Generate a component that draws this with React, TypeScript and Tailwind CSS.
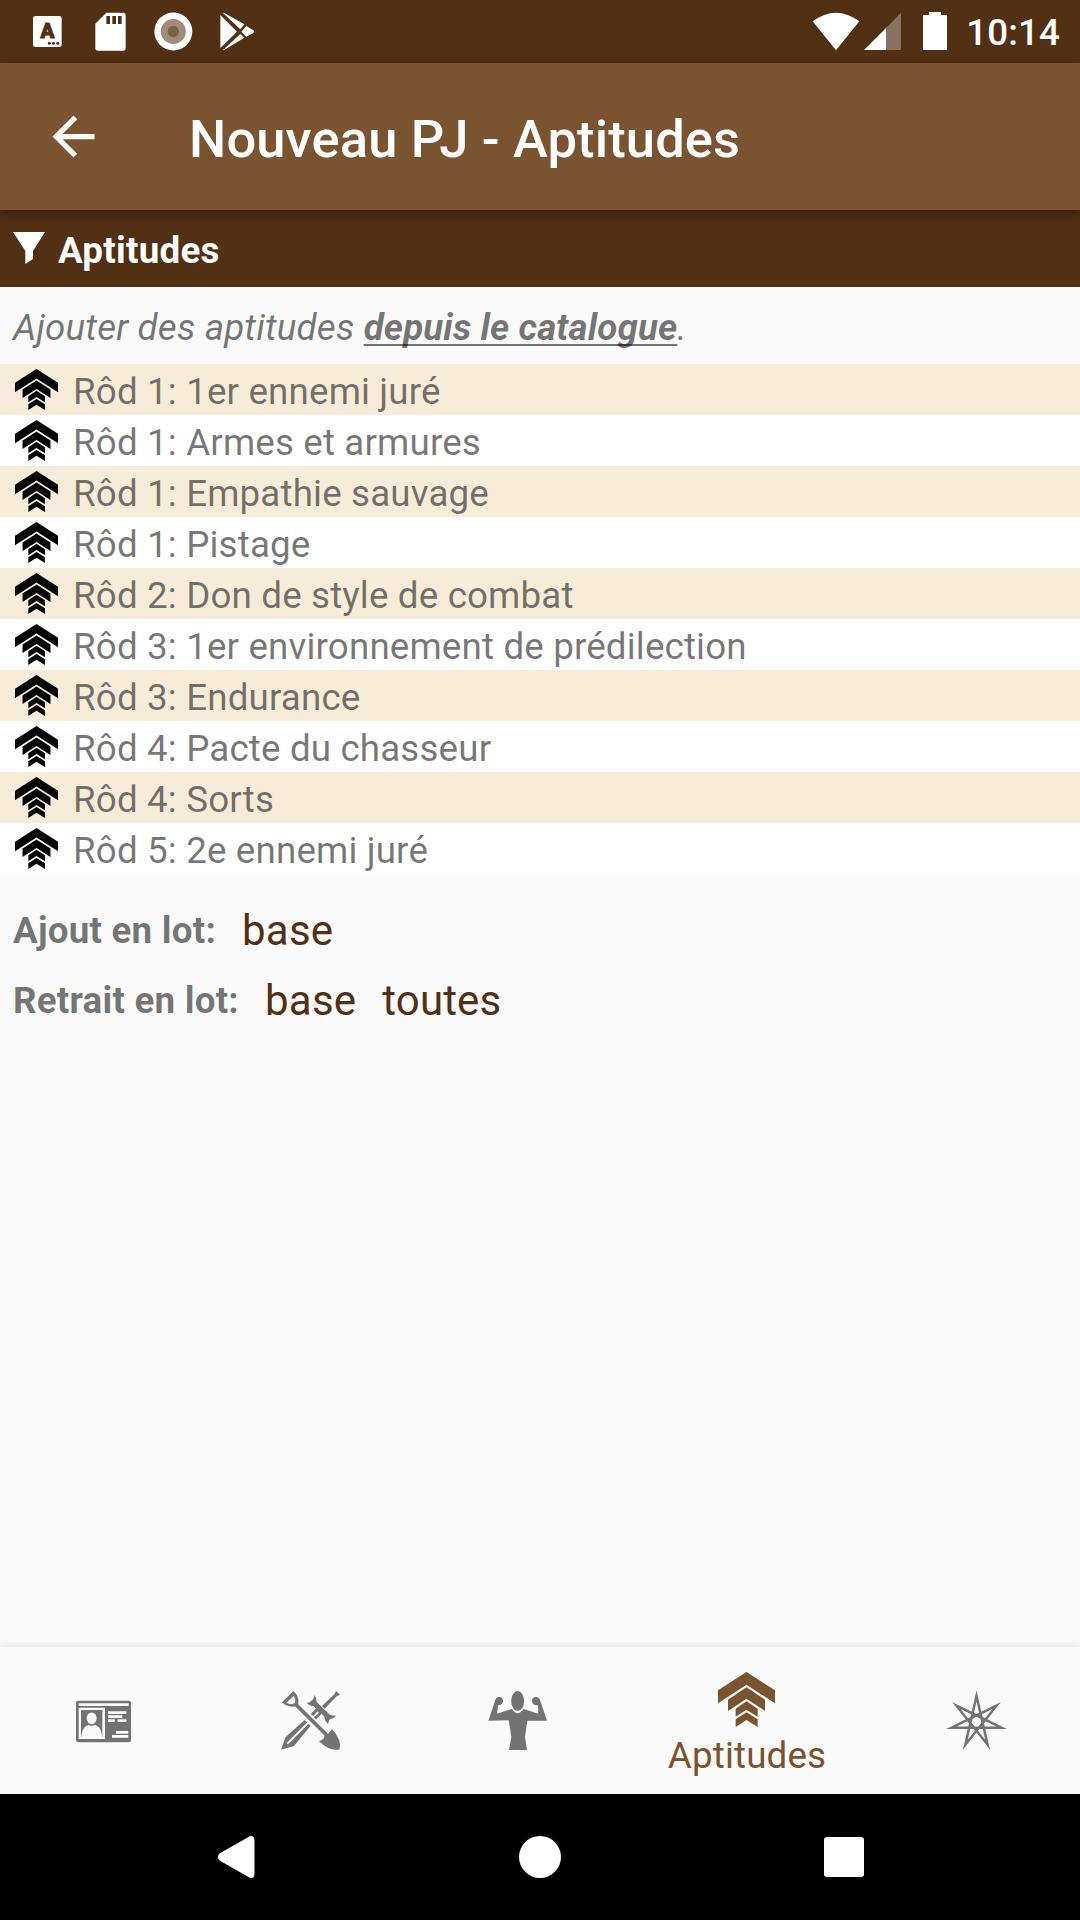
import React from "react";

const aptitudes = [
  "Rôd 1: 1er ennemi juré",
  "Rôd 1: Armes et armures",
  "Rôd 1: Empathie sauvage",
  "Rôd 1: Pistage",
  "Rôd 2: Don de style de combat",
  "Rôd 3: 1er environnement de prédilection",
  "Rôd 3: Endurance",
  "Rôd 4: Pacte du chasseur",
  "Rôd 4: Sorts",
  "Rôd 5: 2e ennemi juré",
];

function Chevrons({ className }: { className: string }) {
  return (
    <svg className={className} viewBox="804 126 171 165" preserveAspectRatio="none" fill="currentColor">
      <path d="M889.5 126 975 181v39l-85.500-56L804 220v-39z" />
      <path d="M889.500 172 945 209v34l-55.500-37L834 243v-34z" />
      <path d="M889.500 214 923 236v24l-33.500-21-32.500 21v-24z" />
      <path d="M889.500 247 923 268v23l-33.500-21-32.500 21v-23z" />
    </svg>
  );
}

function StatusBar() {
  return (
    <header className="flex h-[63px] items-center bg-[#513014] pl-4 pr-[20px] text-white">
      <svg className="size-[63px]" viewBox="48 0 189 189" fill="currentColor">
        <rect x="99" y="48" width="86" height="93" rx="7" />
        <text x="142" y="114" fontSize="61" fontWeight="900" textAnchor="middle" fontFamily="Roboto, sans-serif" fill="#513014" stroke="#513014" strokeWidth="3">A</text>
        <g fill="#513014">
          <circle cx="148" cy="129.500" r="4.500" />
          <circle cx="160.500" cy="129.500" r="4.500" />
          <circle cx="173" cy="129.500" r="4.500" />
        </g>
      </svg>
      <svg className="size-[63px]" viewBox="237 0 189 189" fill="currentColor">
        <path d="M319 38h50q8 0 8 8v98q0 8-8 8h-75q-8 0-8-8V71z" />
        <path fill="#513014" d="M319 48h11v24h-11zM337 48h11v24h-11zM354 48h11v24h-11z" />
      </svg>
      <svg className="size-[63px]" viewBox="426 0 189 189">
        <circle cx="520" cy="94.500" r="57" fill="white" />
        <circle cx="520" cy="94.500" r="37.500" fill="#a18c7b" />
        <circle cx="520" cy="94.500" r="17" fill="#7b6149" />
      </svg>
      <svg className="size-[63px]" viewBox="615 0 189 189" fill="currentColor">
        <path d="M661 45 711 95l-50 49zM668 38q5 0 9 3l56 32-12 15zM668 151l53-49 12 11-57 35q-4 3-8 3zM739 78l21 13q5 4 0 8l-21 11-15-15z" />
      </svg>
      <div className="flex-1" />
      <svg className="h-[63px] w-[57px]" viewBox="72 0 171 189" fill="currentColor">
        <path d="M95 64q70-52 140 0l-70 87z" />
      </svg>
      <svg className="h-[63px] w-[49px]" viewBox="243 0 147 189" fill="currentColor">
        <path d="M360 38V150H315V84z" opacity=".32" />
        <path d="M315 84V150H249z" />
      </svg>
      <svg className="h-[63px] w-[48px]" viewBox="390 0 144 189" fill="currentColor">
        <path d="M444 36h36v9h18v105h-72V45h18z" />
      </svg>
      <span className="ml-[7px] mt-[4px] text-[36.75px] leading-none font-medium tracking-[0.1px]">10:14</span>
    </header>
  );
}

function AppBar() {
  return (
    <div className="relative z-10 flex h-[147px] items-center bg-[#7a5330] text-white shadow-[0_4px_10px_rgba(0,0,0,0.35)]">
      <svg className="ml-[42px] size-[63px]" viewBox="0 0 24 24" fill="currentColor">
        <path d="M20 11H7.830l5.590-5.590L12 4l-8 8 8 8 1.410-1.410L7.830 13H20v-2z" />
      </svg>
      <h1 className="ml-[84px] mt-[5px] text-[52.5px] leading-none font-medium tracking-[0.13px] whitespace-nowrap">Nouveau PJ - Aptitudes</h1>
    </div>
  );
}

function BottomNav() {
  const item = "flex w-[207px] items-center justify-center";
  return (
    <nav className="flex h-[147px] bg-[#fafafa] text-[#737373] shadow-[0_-1px_8px_rgba(0,0,0,0.1)]">
      <div className={item}>
        <svg className="size-[63px]" viewBox="66 177 189 189" fill="currentColor">
          <rect x="78" y="212" width="165" height="125" rx="7" />
          <path fill="#fafafa" d="M86 220h150v8H86zM86 233h79v94H86zM174 244h55v8h-55zM174 256h43v8h-43zM174 268h20v8h-20zM203 268h26v8h-26zM198 303h37v8h-37zM186 315h49v8h-49z" />
          <path d="M93 240h64v81H93z" />
          <ellipse cx="125" cy="265" rx="15" ry="17.500" fill="#fafafa" />
          <path fill="#fafafa" d="M110 287q5-3 8-1 7 4 14 0 4-2 9 1 14 8 15 34H94q2-27 16-34z" />
        </svg>
      </div>
      <div className={item}>
        <svg className="size-[63px]" viewBox="21 15 189 189" fill="currentColor">
          {/* sword: hilt, guard, blade */}
          <path d="M192 21 204 32 194 37 158 74 150 66 187 31z" />
          <path d="M127 33Q135 42 134 54L172 91Q182 97 192 94 188 103 175 105 169 110 168 120 158 111 157 98L149 89 131 107 125 101 141 86 137 82 123 96 116 90 132 74 125 66Q112 66 104 56 114 58 117 51 125 48 127 33z" />
          <path d="M98 108 116 125 66 186 27 197 41 159z" />
          <path d="M112 113 46 179" stroke="#fafafa" strokeWidth="6" />
          {/* shovel: grip, shaft, scoop */}
          <path d="M71 61 164 153" stroke="#fafafa" strokeWidth="22" />
          <path fillRule="evenodd" d="M64 21Q82 36 79 60L72 67Q47 72 30 55zM66 35 42 57Q57 63 68 58 72 46 66 35z" />
          <path d="M70 60 164 153" stroke="currentColor" strokeWidth="11.500" />
          <path d="M180 135Q210 168 203 196 174 204 141 172L155 164 159 152 169 149z" />
        </svg>
      </div>
      <div className={item}>
        <svg className="size-[63px]" viewBox="108 177 189 189" fill="currentColor">
          <ellipse cx="203" cy="213" rx="19.500" ry="30" />
          <path d="M115 272l21-62q2-9 13-9 10 1 10 12 0 12-15 13l-3 25 44-14q18 25 36 0l44 14-1-25q-17 1-18-13 0-11 11-12 10 0 13 9l21 62h-59l-7 49 6 39h-54l7-39-8-50z" />
        </svg>
      </div>
      <div className="flex w-[252px] flex-col items-center pt-[25px] text-[#7a5330]">
        <Chevrons className="mr-px h-[55px] w-[57px]" />
        <span className="mt-[7px] text-[36.75px] leading-[43px] tracking-[0.15px]">Aptitudes</span>
      </div>
      <div className={item}>
        <svg className="size-[63px]" viewBox="75 57 189 189" fill="none" stroke="currentColor" strokeWidth="7.500" strokeMiterlimit="10">
          <path d="M169.500 78 202.900 224.400 109.300 107 244.600 173H94.400L229.700 107 136.100 224.400z" />
        </svg>
      </div>
    </nav>
  );
}

export default function App() {
  return (
    <div className="flex h-[1920px] w-[1080px] flex-col overflow-hidden bg-[#fafafa] font-['Roboto',sans-serif] text-[36.75px] leading-[43px] tracking-[0.15px] text-black/54">
      <StatusBar />
      <AppBar />
      <div className="flex h-[77px] items-center bg-[#513014] text-white">
        <svg className="mb-[2px] ml-[13px] h-8 w-8" viewBox="39 516 96 96" fill="currentColor">
          <path d="M39 516h96l-36 57v24l-23 15v-39z" />
        </svg>
        <h2 className="ml-[13px] mt-[3px] font-bold tracking-[0.25px]">Aptitudes</h2>
      </div>
      <p className="flex h-[77px] items-center pl-[13px] pt-[3px] italic whitespace-pre">
        <span>Ajouter des aptitudes </span>
        <span className="font-bold tracking-[0.1px] underline decoration-2 underline-offset-[4px] [text-decoration-skip-ink:none]">depuis le catalogue</span>
        <span>.</span>
      </p>
      <ul>
        {aptitudes.map((name) => (
          <li key={name} className="flex h-[51px] items-center bg-white odd:bg-[#f7ecda]">
            <Chevrons className="ml-[15px] h-[41px] w-[43px] text-black" />
            <span className="ml-[15px] mt-[4px]">{name}</span>
          </li>
        ))}
      </ul>
      <div className="mt-[27px] flex h-[58px] items-center pl-[13px]">
        <span className="font-bold tracking-[0.23px]">Ajout en lot:</span>
        <span className="ml-[26px] text-[42px] text-[#513014] tracking-[0.25px]">base</span>
      </div>
      <div className="mt-[12px] flex h-[58px] items-center pl-[13px]">
        <span className="font-bold tracking-[0.23px]">Retrait en lot:</span>
        <span className="ml-[26px] text-[42px] text-[#513014] tracking-[0.25px]">base</span>
        <span className="ml-[26px] text-[42px] text-[#513014]">toutes</span>
      </div>
      <div className="flex-1" />
      <BottomNav />
      <footer className="flex h-[126px] items-center bg-black pl-[217px] text-white">
        <svg className="h-[44px] w-[38px]" viewBox="0 0 38 44" fill="currentColor">
          <path d="M31.500 2Q34 0 36 1.500 37.500 2.500 37.500 5V39q0 2.500-1.500 3.500-2 1.500-4.500-.5L2.500 25.500q-3.500-3.500 0-7z" />
        </svg>
        <div className="ml-[264px] size-[42px] rounded-full bg-white" />
        <div className="ml-[263px] size-10 rounded-[3px] bg-white" />
      </footer>
    </div>
  );
}
